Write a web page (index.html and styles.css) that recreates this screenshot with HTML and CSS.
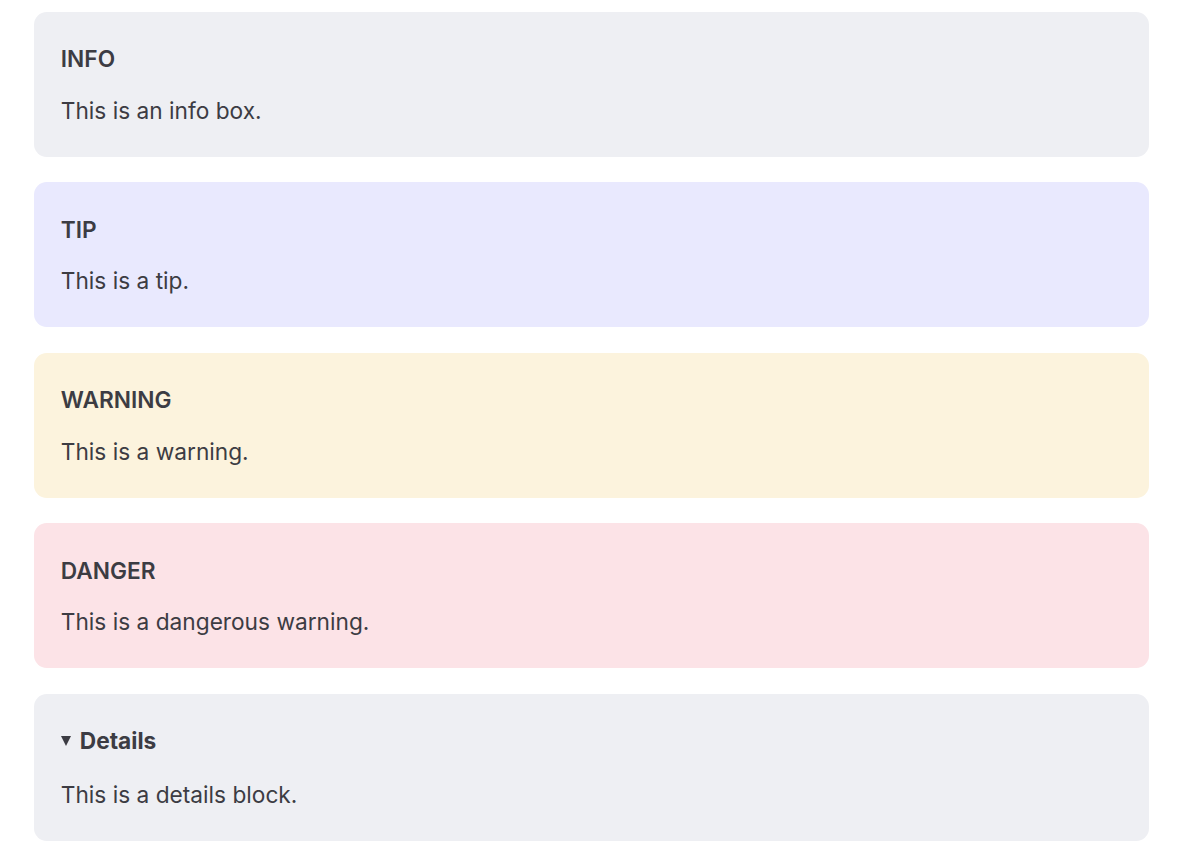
FILE: index.html
```html
<!DOCTYPE html>
<html lang="en">
<head>
<meta charset="utf-8">
<title>Custom blocks</title>
<link rel="stylesheet" href="styles.css">
</head>
<body>
<main class="doc">
  <div class="block block-info">
    <p class="block-title">INFO</p>
    <p>This is an info box.</p>
  </div>
  <div class="block block-tip">
    <p class="block-title">TIP</p>
    <p>This is a tip.</p>
  </div>
  <div class="block block-warning">
    <p class="block-title">WARNING</p>
    <p>This is a warning.</p>
  </div>
  <div class="block block-danger">
    <p class="block-title">DANGER</p>
    <p>This is a dangerous warning.</p>
  </div>
  <details class="block block-details" open>
    <summary class="details-summary">Details</summary>
    <p>This is a details block.</p>
  </details>
</main>
</body>
</html>
```

FILE: styles.css
```css
html, body {
  margin: 0;
  padding: 0;
  background: #ffffff;
}

body {
  font-family: Inter, "Noto Sans", sans-serif;
  color: #3c3c43;
}

.doc {
  width: 1115px;
  margin-left: 34px;
  padding-top: 12px;
  display: flex;
  flex-direction: column;
  gap: 25.8px;
}

.block {
  border: 1px solid transparent;
  border-radius: 12.8px;
  padding: 27.4px 25.8px 12.1px;
  font-size: 22.7px;
  line-height: 38.7px;
  color: #3c3c43;
}

.block p {
  margin: 12.9px 0;
  line-height: 38.7px;
}

.block p:first-child {
  margin: 0;
}

.block .block-title {
  font-weight: 600;
}

.block-info {
  background: #eeeff3;
}

.block-tip {
  background: #e9e9fe;
}

.block-warning {
  background: #fcf3dd;
}

.block-danger {
  background: #fce3e7;
}

.block-details {
  background: #eeeff3;
}

.details-summary {
  display: block;
  list-style: none;
  margin: 0 0 15px;
  font-weight: 700;
  cursor: pointer;
}

.details-summary::-webkit-details-marker {
  display: none;
}

.details-summary::before {
  content: "";
  display: inline-block;
  width: 0;
  height: 0;
  border-left: 5.5px solid transparent;
  border-right: 5.5px solid transparent;
  border-top: 10px solid #3c3c43;
  margin-right: 9px;
  vertical-align: 3px;
}

.block-details p {
  margin-top: 15px;
}
```
